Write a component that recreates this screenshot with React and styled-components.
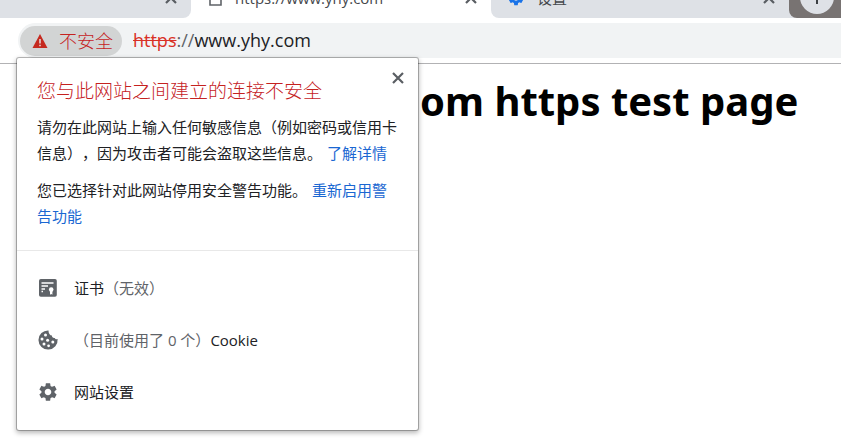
import React from 'react';
import styled, { createGlobalStyle } from 'styled-components';
import { MdSettings } from 'react-icons/md';

const GlobalStyle = createGlobalStyle`
  * { box-sizing: border-box; }
  body {
    margin: 0;
    background: #fff;
    color: #202124;
    font-family: "Open Sans", "Noto Sans CJK SC", sans-serif;
    text-spacing-trim: space-all;
  }
  button { font: inherit; color: inherit; border: 0; padding: 0; background: none; cursor: pointer; }
  svg { display: block; flex: none; }
`;

const Browser = styled.div`
  position: relative;
  min-height: 100vh;
  overflow: hidden;
`;

const TabStrip = styled.div`
  display: flex;
  align-items: flex-end;
  height: 18px;
  overflow: hidden;
  background: #787372;
`;

const Tab = styled.div`
  flex: none;
  width: ${(p) => p.$width}px;
  background: ${(p) => (p.$last ? 'linear-gradient(90deg, #fff 50%, #787372 50%)' : '#fff')};
`;

const TabBody = styled.div`
  display: flex;
  align-items: center;
  gap: 12px;
  height: 40px;
  padding: 0 12px 0 16px;
  background: ${(p) => (p.$active ? '#fff' : '#dee1e6')};
  border-radius: ${(p) => p.$radius};
  color: #45484c;
  font-size: 15px;
`;

const TabTitle = styled.span`
  flex: 1;
  line-height: 20px;
  white-space: nowrap;
`;

const TabClose = styled.button`
  width: 14px;
  height: 16px;
`;

const StripEnd = styled.div`
  flex: 1;
  height: 40px;
  background: #dee1e6;
`;

const StripFrame = styled.div`
  display: flex;
  height: 40px;
  padding: 2px 0 0 11px;
  border-radius: 0 0 0 8px;
  background: #787372;
`;

const NewTab = styled.button`
  display: flex;
  align-items: center;
  justify-content: center;
  width: 34px;
  height: 34px;
  border-radius: 50%;
  background: #dee1e6;
`;

const Toolbar = styled.div`
  height: 46px;
  padding: 5px 0 5px 18px;
  border-bottom: 1px solid #b2b2b4;
  background: #fff;
`;

const AddressBar = styled.div`
  display: flex;
  align-items: center;
  gap: 11px;
  height: 35px;
  padding-left: 2px;
  border-radius: 18px 0 0 18px;
  background: #f1f3f4;
`;

const SecurityChip = styled.button`
  display: flex;
  align-items: center;
  gap: 11px;
  height: 30px;
  padding: 0 9px 0 12px;
  border-radius: 15px;
  background: #d2d4d4;
  color: #c5221f;
  font-size: 18px;
  font-weight: 300;
  line-height: 30px;
`;

const Address = styled.div`
  padding-bottom: 2px;
  font-size: 18px;
  line-height: 28px;
  white-space: nowrap;
`;

const Scheme = styled.s`
  color: #d93025;
`;

const Muted = styled.span`
  color: #5f6368;
`;

const PageHeading = styled.h1`
  margin: 8px 0 0;
  padding-left: 420px;
  color: #000;
  font-family: "Noto Sans", sans-serif;
  font-size: 40px;
  line-height: 58px;
  white-space: nowrap;
`;

const Popup = styled.section`
  position: absolute;
  top: 58px;
  left: 17px;
  width: 401px;
  border-radius: 2px;
  background: #fff;
  box-shadow: 0 0 0 1px rgba(0, 0, 0, 0.25), 0 2px 5px 1px rgba(0, 0, 0, 0.28);
`;

const PopupHeader = styled.header`
  display: flex;
  justify-content: space-between;
  padding: 10px 10px 0 20px;
`;

const PopupTitle = styled.h2`
  margin: 9px 0;
  color: #c5221f;
  font-size: 19px;
  font-weight: 300;
  line-height: 28px;
`;

const CloseButton = styled.button`
  display: flex;
  align-items: center;
  justify-content: center;
  width: 20px;
  height: 20px;
`;

const Message = styled.div`
  display: grid;
  gap: 11px;
  padding: 0 20px 21px;
  border-bottom: 1px solid #e8e8e8;
`;

const Paragraph = styled.p`
  margin: 0;
  font-size: 15px;
  line-height: 26px;
`;

const Link = styled.a`
  margin-left: 5px;
  color: #1a67d2;
  text-decoration: none;
`;

const Menu = styled.div`
  display: flex;
  flex-direction: column;
  padding: 11px 0 12px;
`;

const MenuRow = styled.button`
  display: flex;
  align-items: center;
  gap: 15px;
  height: 52px;
  padding: 0 20px;
  font-size: 15px;
  line-height: 26px;
  text-align: left;
`;

function Cross() {
  return (
    <svg width="12" height="12" viewBox="0 0 12 12" fill="none" stroke="#5a5e63" strokeWidth="2.2">
      <path d="M1 1l10 10M11 1L1 11" />
    </svg>
  );
}

function WarningIcon() {
  return (
    <svg width="16" height="16" viewBox="0 0 16 16">
      <path d="M8 1L15.5 15H.5z" fill="#c5291f" />
      <path d="M7.2 6h1.6v4.5H7.2zM7.2 11.7h1.6v1.6H7.2z" fill="#e3d3d2" />
    </svg>
  );
}

function CertificateIcon() {
  return (
    <svg width="22" height="22" viewBox="0 0 22 22">
      <rect x="2" y="2" width="17.8" height="17.8" rx="1.8" fill="#5f6368" />
      <path d="M4.5 6h12M4.5 9h6.5M4.5 12h3.5M4.5 14.5h1.5" stroke="#fff" strokeWidth="1.3" />
      <circle cx="14.2" cy="12.6" r="2.3" fill="#fff" />
      <path d="M13 14h2.4v3.8l-1.2-.7-1.2.7z" fill="#fff" />
    </svg>
  );
}

function CookieIcon() {
  return (
    <svg width="22" height="22" viewBox="0 0 22 22">
      <path
        d="M11.5 1.4A9.6 9.6 0 1 0 20.6 10c-1.3.4-2.4 0-2.9-1.1-1.6.3-2.8-.6-2.8-2.3-2-.3-3.5-2.4-3.4-5.2z"
        fill="#5f6368"
      />
      <g fill="#fff">
        <circle cx="8.5" cy="6" r="1.5" />
        <circle cx="5" cy="10" r="1.5" />
        <circle cx="10.6" cy="11.2" r="1.5" />
        <circle cx="15.8" cy="13" r="1.5" />
        <circle cx="7" cy="15" r="1.5" />
        <circle cx="11.6" cy="16.8" r="1.4" />
      </g>
    </svg>
  );
}

export default function App() {
  return (
    <Browser>
      <GlobalStyle />
      <TabStrip>
        <Tab $width={191}>
          <TabBody $radius="0 0 8px 0">
            <TabTitle />
            <TabClose aria-label="关闭"><Cross /></TabClose>
          </TabBody>
        </Tab>
        <Tab $width={300}>
          <TabBody $active $radius="0">
            <svg width="16" height="16" viewBox="0 0 16 16" fill="none" stroke="#5f6368" strokeWidth="1.6">
              <path d="M3 1h7l4 4v10H3z" />
            </svg>
            <TabTitle>https://www.yhy.com</TabTitle>
            <TabClose aria-label="关闭"><Cross /></TabClose>
          </TabBody>
        </Tab>
        <Tab $width={298} $last>
          <TabBody $radius="0 0 0 8px">
            <MdSettings size={18} color="#1a73e8" />
            <TabTitle>设置</TabTitle>
            <TabClose aria-label="关闭"><Cross /></TabClose>
          </TabBody>
        </Tab>
        <StripEnd>
          <StripFrame>
            <NewTab aria-label="新标签页">
              <svg width="16" height="16" viewBox="0 0 16 16" stroke="#3c4043" strokeWidth="2">
                <path d="M8 1v14M1 8h14" />
              </svg>
            </NewTab>
          </StripFrame>
        </StripEnd>
      </TabStrip>
      <Toolbar>
        <AddressBar>
          <SecurityChip><WarningIcon />不安全</SecurityChip>
          <Address role="textbox" aria-label="地址" tabIndex={0}>
            <Scheme>https</Scheme><Muted>://</Muted>www.yhy.com
          </Address>
        </AddressBar>
      </Toolbar>
      <PageHeading>om https test page</PageHeading>
      <Popup role="dialog" aria-labelledby="popup-title">
        <PopupHeader>
          <PopupTitle id="popup-title">您与此网站之间建立的连接不安全</PopupTitle>
          <CloseButton aria-label="关闭"><Cross /></CloseButton>
        </PopupHeader>
        <Message>
          <Paragraph>
            请勿在此网站上输入任何敏感信息（例如密码或信用卡信息），因为攻击者可能会盗取这些信息。<Link href="#details">了解详情</Link>
          </Paragraph>
          <Paragraph>
            您已选择针对此网站停用安全警告功能。<Link href="#enable">重新启用警告功能</Link>
          </Paragraph>
        </Message>
        <Menu>
          <MenuRow><CertificateIcon /><span>证书<Muted>（无效）</Muted></span></MenuRow>
          <MenuRow><CookieIcon /><span><Muted>（目前使用了 0 个）</Muted>Cookie</span></MenuRow>
          <MenuRow><MdSettings size={22} color="#5f6368" /><span>网站设置</span></MenuRow>
        </Menu>
      </Popup>
    </Browser>
  );
}
